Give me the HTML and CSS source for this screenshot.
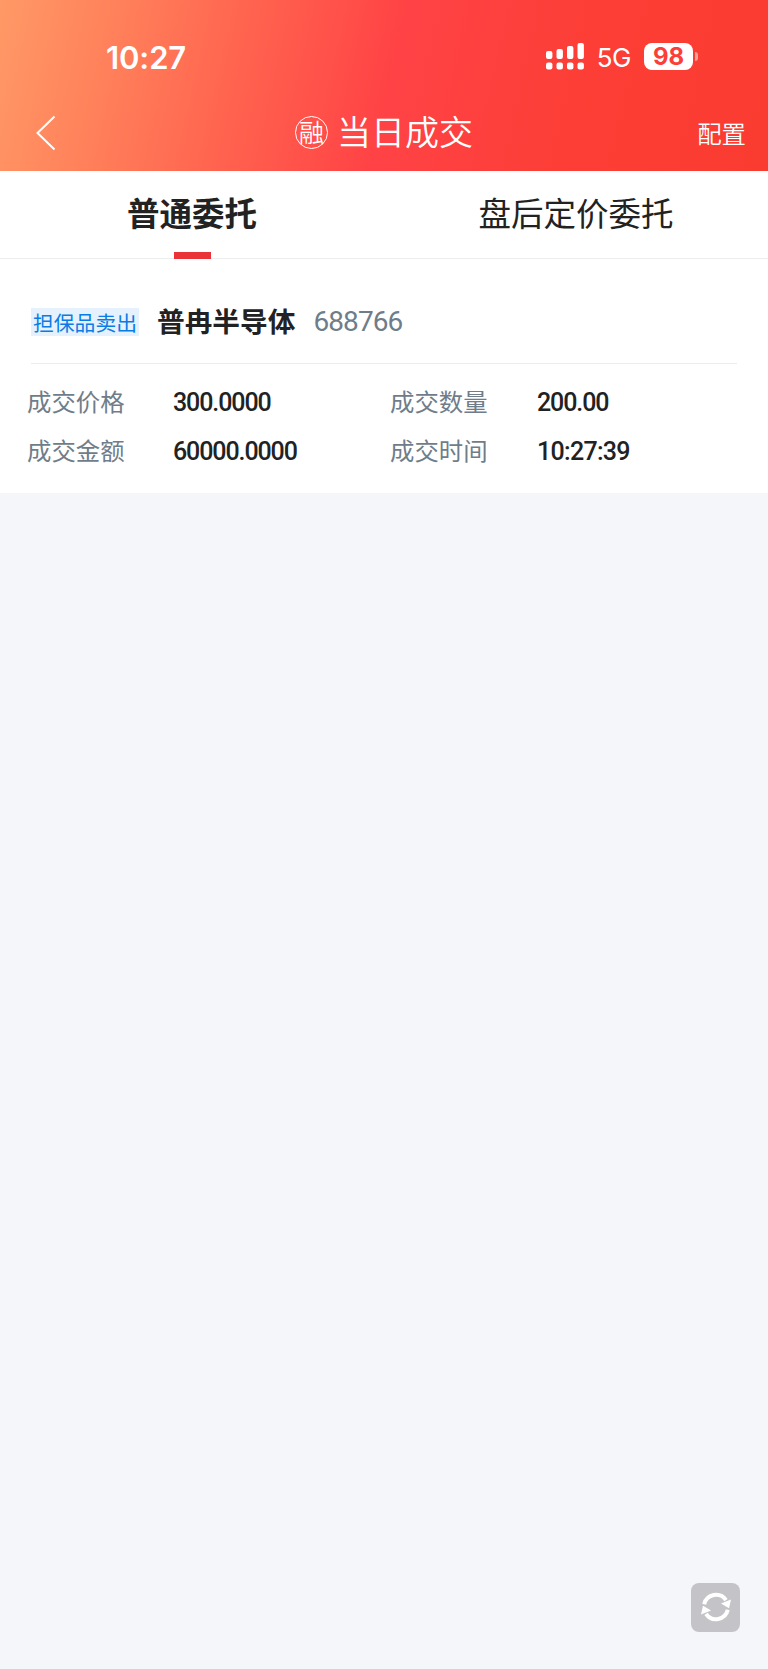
FILE: index.html
```
<!DOCTYPE html>
<html lang="zh-CN">

<head>
    <meta charset="UTF-8">
    <meta name="viewport" content="width=device-width, initial-scale=1.0">
    <title>当日成交</title>
    <link rel="stylesheet" href="styles.css">
</head>

<body>
    <header class="header">
        <div class="status-bar">
            <span class="clock">10:27</span>
            <div class="status-icons">
                <svg class="signal" width="38" height="27" viewBox="0 0 38 27" fill="#fff">
                    <rect x="0" y="8" width="6.4" height="8" rx="2" />
                    <rect x="10.5" y="6" width="6.4" height="10" rx="2" />
                    <rect x="21" y="3" width="6.4" height="13" rx="2" />
                    <rect x="31.5" y="0" width="6.4" height="16" rx="2" />
                    <rect x="0" y="19.5" width="6.4" height="7" rx="2" />
                    <rect x="10.5" y="19.5" width="6.4" height="7" rx="2" />
                    <rect x="21" y="19.5" width="6.4" height="7" rx="2" />
                    <rect x="31.5" y="19.5" width="6.4" height="7" rx="2" />
                </svg>
                <span class="network">5G</span>
                <span class="battery">98</span>
                <span class="battery-tip"></span>
            </div>
        </div>
        <nav class="nav-bar">
            <svg class="back" width="20" height="36" viewBox="0 0 20 36" fill="none" stroke="#fff" stroke-width="2">
                <path d="M18.5 1.5L1.5 18L18.5 34.5" />
            </svg>
            <div class="title">
                <span class="margin-badge">融</span>
                <h1>当日成交</h1>
            </div>
            <a class="config">配置</a>
        </nav>
    </header>

    <div class="tabs">
        <div class="tab active">普通委托</div>
        <div class="tab">盘后定价委托</div>
    </div>

    <section class="deal">
        <div class="deal-head">
            <span class="tag">担保品卖出</span>
            <span class="stock-name">普冉半导体</span>
            <span class="stock-code">688766</span>
        </div>
        <div class="deal-info">
            <span class="label">成交价格</span>
            <span class="value">300.0000</span>
            <span class="label">成交数量</span>
            <span class="value">200.00</span>
            <span class="label">成交金额</span>
            <span class="value">60000.0000</span>
            <span class="label">成交时间</span>
            <span class="value time">10:27:39</span>
        </div>
    </section>

    <!-- Floating refresh button -->
    <button class="refresh">
        <svg width="32" height="32" viewBox="0 0 32 32">
            <g fill="none" stroke="#fff" stroke-width="4">
                <path d="M4.2 13.2A12.1 12.1 0 0 1 26 9.2" />
                <path d="M27.8 18.8A12.1 12.1 0 0 1 6 22.8" />
            </g>
            <path fill="#fff" d="M31 8.4L29 17.3L21 12.6Z" />
            <path fill="#fff" d="M1 23.6L3 14.7L11 19.4Z" />
        </svg>
    </button>
</body>

</html>
```
FILE: styles.css
```
body {
    font-family: "Noto Sans CJK SC", sans-serif;
    background-color: #f4f6fa;
    margin: 0;
    min-height: 100vh;
    color: #222;
}

.header {
    height: 171px;
    background: linear-gradient(103deg, #ff9966 0%, #ff7f5a 16%, #ff6650 30%, #ff4245 51%, #fc3e36 75%, #fa3b30 100%);
    color: #fff;
}

.status-bar {
    display: flex;
    justify-content: space-between;
    align-items: center;
    height: 57px;
    padding: 28px 70px 0 106px;
}

.clock {
    margin-top: 1px;
    font-family: Inter, sans-serif;
    font-size: 31px;
    font-weight: 600;
    line-height: 57px;
    letter-spacing: -0.1px;
}

.status-icons {
    display: flex;
    align-items: center;
}

.network {
    margin: 2px 13px 0 13px;
    font-family: Inter, sans-serif;
    font-size: 26px;
    line-height: 30px;
    letter-spacing: -0.5px;
}

.battery {
    width: 49px;
    height: 27px;
    border-radius: 8px;
    background-color: #fff;
    color: #fc3e38;
    font-family: Inter, sans-serif;
    font-size: 24px;
    font-weight: 700;
    line-height: 27px;
    text-align: center;
}

.battery-tip {
    width: 3px;
    height: 9px;
    margin-left: 2px;
    border-radius: 0 4px 4px 0;
    background-color: rgba(255, 255, 255, 0.5);
}

.nav-bar {
    display: grid;
    grid-template-columns: 1fr auto 1fr;
    align-items: center;
    height: 86px;
    padding: 9px 22px 0 36px;
    box-sizing: border-box;
}

.title {
    display: flex;
    align-items: center;
    margin-right: 14px;
}

.title h1 {
    margin: -3px 0 0 9px;
    font-size: 34px;
    font-weight: 350;
    line-height: 50px;
}

.margin-badge {
    width: 31px;
    height: 31px;
    border: 1px solid #fff;
    border-radius: 50%;
    font-size: 25px;
    font-weight: 350;
    line-height: 28px;
    text-align: center;
}

.config {
    justify-self: end;
    margin-top: -1px;
    font-size: 24.4px;
    font-weight: 350;
}

.tabs {
    display: flex;
    height: 87px;
    background-color: #fff;
    border-bottom: 1px solid #ecedef;
}

.tab {
    position: relative;
    flex: 1;
    font-size: 32.5px;
    line-height: 82px;
    text-align: center;
}

.tab.active {
    font-weight: 700;
}

.tab.active::after {
    content: "";
    position: absolute;
    left: 50%;
    bottom: -1px;
    width: 37px;
    height: 7px;
    margin-left: -18.5px;
    background-color: #ea3336;
}

.deal {
    height: 234px;
    background-color: #fff;
}

.deal-head {
    display: flex;
    align-items: center;
    height: 105px;
    margin: 0 31px;
    padding-top: 20px;
    box-sizing: border-box;
    border-bottom: 1px solid #ecedef;
}

.tag {
    padding: 0 2px;
    margin: 1px 18px 0 0;
    background-color: #e5f1fc;
    color: #0a7ce6;
    font-size: 20.8px;
    line-height: 28px;
}

.stock-name {
    margin-top: -3px;
    font-size: 27.7px;
    font-weight: 700;
    line-height: 40px;
}

.stock-code {
    margin: 1px 0 0 18px;
    color: #6f7d8a;
    font-family: Roboto, sans-serif;
    font-size: 28px;
    font-weight: 400;
    letter-spacing: -0.9px;
}

.deal-info {
    display: grid;
    grid-template-columns: 145px 218px 146px 1fr;
    grid-auto-rows: 49px;
    align-items: center;
    padding: 14px 0 0 27px;
}

.label {
    margin-top: -4px;
    color: #6f7d8a;
    font-size: 24.4px;
}

.value {
    margin-left: 1px;
    font-family: Roboto, sans-serif;
    font-size: 25px;
    font-weight: 500;
    letter-spacing: -1.1px;
}

.value.time {
    letter-spacing: -0.7px;
}

.refresh {
    position: fixed;
    right: 28px;
    bottom: 37px;
    display: flex;
    align-items: center;
    justify-content: center;
    width: 49px;
    height: 49px;
    padding: 0 0 1px 0;
    border: none;
    border-radius: 8px;
    background-color: #c4c4c8;
    cursor: pointer;
}
```
